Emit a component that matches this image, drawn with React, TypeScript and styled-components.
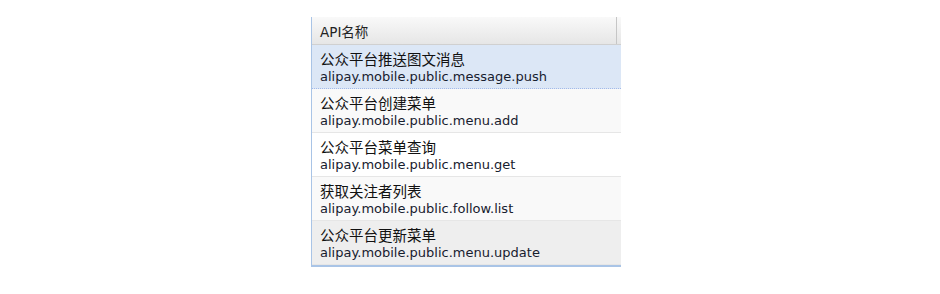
import React from 'react'
import styled, { createGlobalStyle } from 'styled-components'

const GlobalStyle = createGlobalStyle`
  html, body {
    margin: 0;
    padding: 0;
    background: #fff;
  }
`

const Page = styled.div`
  width: 940px;
  height: 294px;
  padding: 17px 0 0 311px;
  box-sizing: border-box;
`

const Grid = styled.div`
  width: 309px;
  border-left: 1px solid #a9c4e6;
  border-bottom: 2px solid #a9c4e6;
  font-family: Tahoma, "DejaVu Sans", "Noto Sans CJK SC", sans-serif;
`

const Header = styled.div`
  height: 27px;
  display: flex;
  background: linear-gradient(#f9f9f9, #e6e6e6);
  border-bottom: 1px solid #d0d0d0;
`

const HeaderCell = styled.div`
  flex: 1;
  display: flex;
  align-items: center;
  padding-left: 8px;
  font-size: 13.5px;
  color: #222;
  border-right: 1px solid #c6c6c6;
`

const Spacer = styled.div`
  width: 4px;
`

type RowKind = 'selected' | 'plain' | 'alt' | 'hover'

const rowBg: Record<RowKind, string> = {
  selected: '#dce7f6',
  plain: '#ffffff',
  alt: '#f9f9f9',
  hover: '#eeeeee',
}

const Row = styled.div<{ $kind: RowKind }>`
  height: 44px;
  padding: 6px 0 0 8px;
  box-sizing: border-box;
  background: ${p => rowBg[p.$kind]};
  border-bottom: 1px ${p => (p.$kind === 'selected' ? 'dotted #a3bae9' : 'solid #e6e6e6')};
  display: flex;
  flex-direction: column;
`

const Title = styled.div`
  font-size: 14.5px;
  line-height: 18px;
  color: #111;
`

const Method = styled.div`
  font-size: 13px;
  line-height: 16px;
  color: #17202e;
`

const apis: { name: string; method: string; kind: RowKind }[] = [
  { name: '公众平台推送图文消息', method: 'alipay.mobile.public.message.push', kind: 'selected' },
  { name: '公众平台创建菜单', method: 'alipay.mobile.public.menu.add', kind: 'alt' },
  { name: '公众平台菜单查询', method: 'alipay.mobile.public.menu.get', kind: 'plain' },
  { name: '获取关注者列表', method: 'alipay.mobile.public.follow.list', kind: 'alt' },
  { name: '公众平台更新菜单', method: 'alipay.mobile.public.menu.update', kind: 'hover' },
]

const App = () => (
  <>
    <GlobalStyle />
    <Page>
      <Grid>
        <Header>
          <HeaderCell>API名称</HeaderCell>
          <Spacer />
        </Header>
        {apis.map(a => (
          <Row key={a.method} $kind={a.kind}>
            <Title>{a.name}</Title>
            <Method>{a.method}</Method>
          </Row>
        ))}
      </Grid>
    </Page>
  </>
)

export default App
